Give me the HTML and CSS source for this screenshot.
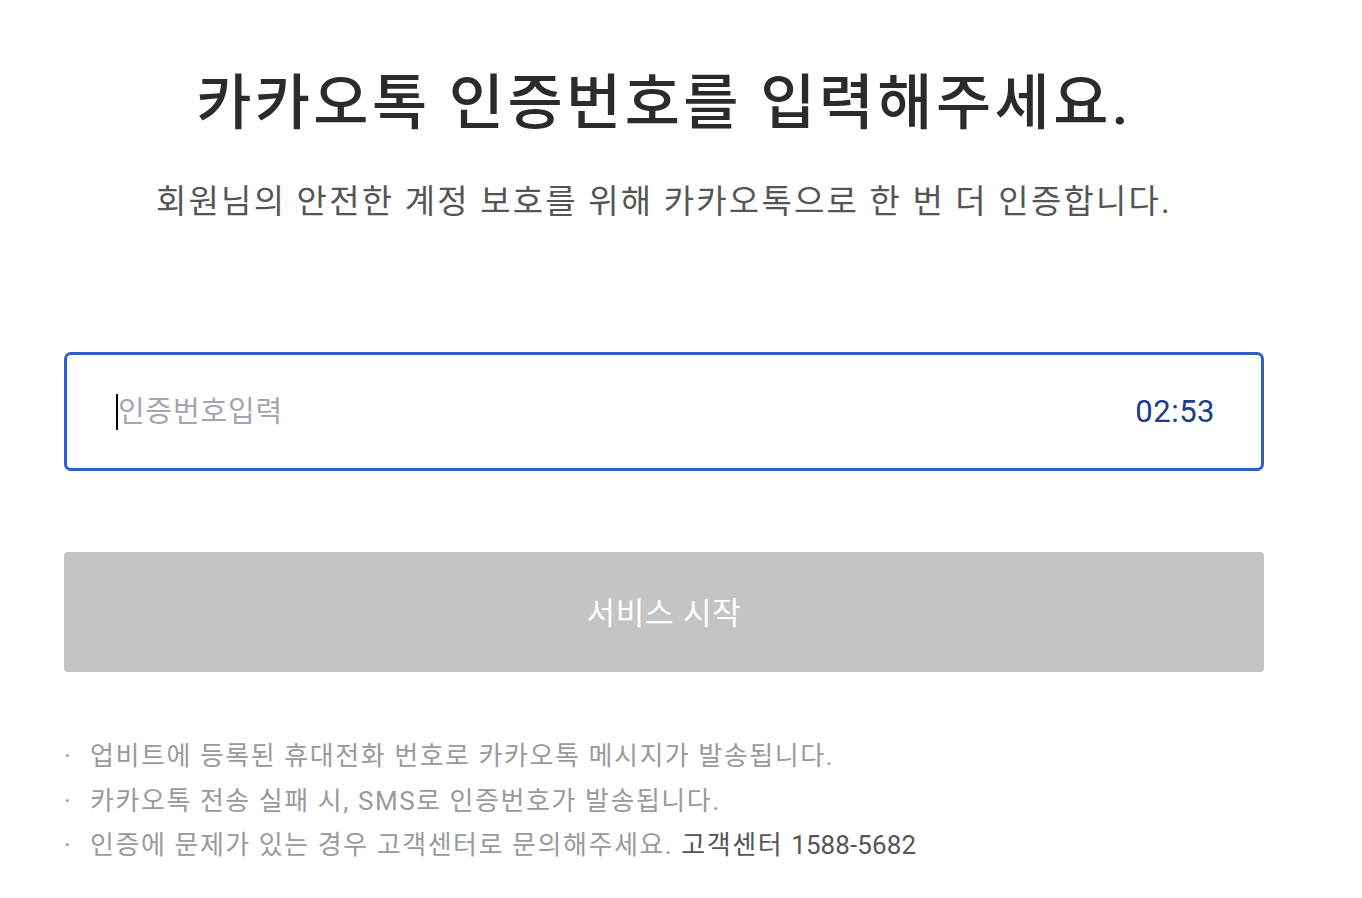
FILE: index.html
```html
<!DOCTYPE html>
<html lang="ko">
<head>
    <meta charset="UTF-8">
    <meta name="viewport" content="width=device-width, initial-scale=1.0">
    <title>카카오톡 인증</title>
    <link rel="stylesheet" href="styles.css">
</head>
<body>
    <div class="container">
        <h1 class="title">카카오톡 인증번호를 입력해주세요.</h1>
        <p class="subtitle">회원님의 안전한 계정 보호를 위해 카카오톡으로 한 번 더 인증합니다.</p>

        <div class="code-box">
            <span class="caret"></span>
            <input type="text" class="code-input" placeholder="인증번호입력">
            <span class="timer">02:53</span>
        </div>

        <button type="button" class="start-btn" disabled>서비스 시작</button>

        <ul class="notes">
            <li>업비트에 등록된 휴대전화 번호로 카카오톡 메시지가 발송됩니다.</li>
            <li>카카오톡 전송 실패 시, SMS로 인증번호가 발송됩니다.</li>
            <li>인증에 문제가 있는 경우 고객센터로 문의해주세요. <span class="cs">고객센터 <span class="cs-num">1588-5682</span></span></li>
        </ul>
    </div>
</body>
</html>
```

FILE: styles.css
```css
body {
    font-family: Roboto, "Noto Sans CJK KR", sans-serif;
    background-color: #fff;
    margin: 0;
    padding: 0;
}
.container {
    width: 1200px;
    margin-left: 64px;
    padding-top: 62px;
}
.title {
    margin: 0;
    text-align: center;
    font-size: 60px;
    font-weight: 500;
    color: #2b2b2b;
    line-height: 84px;
    letter-spacing: 3.4px;
}
.subtitle {
    margin: 34px 0 0;
    text-align: center;
    font-size: 33px;
    color: #555;
    line-height: 44px;
    letter-spacing: 2.2px;
}
.code-box {
    margin-top: 128px;
    height: 113px;
    border: 3px solid #2c5fc9;
    border-radius: 7px;
    display: flex;
    align-items: center;
    padding: 0 46px 0 49px;
}
.caret {
    width: 2px;
    height: 36px;
    background: #000;
}
.code-input {
    flex: 1;
    border: none;
    outline: none;
    font-family: inherit;
    font-size: 29px;
    letter-spacing: 0.8px;
    padding: 0;
    color: #333;
}
.code-input::placeholder {
    color: #a3a6b2;
}
.timer {
    font-size: 31px;
    color: #1b3b8b;
    letter-spacing: 0.5px;
}
.start-btn {
    display: block;
    width: 100%;
    margin-top: 81px;
    height: 120px;
    background-color: #c4c4c4;
    color: #fff;
    border: none;
    border-radius: 4px;
    font-family: inherit;
    font-size: 31px;
    font-weight: 400;
    letter-spacing: 0.8px;
    padding-bottom: 4px;
}
.notes {
    list-style: none;
    margin: 62px 0 0;
    padding: 0;
}
.notes li {
    position: relative;
    padding-left: 26px;
    font-size: 26px;
    line-height: 44.5px;
    color: #9a9a9a;
    letter-spacing: 1.55px;
}
.notes li::before {
    content: "·";
    position: absolute;
    left: 0;
    top: 0;
    color: #9a9a9a;
}
.cs {
    color: #555;
}
.cs-num {
    letter-spacing: 0.1px;
}
```
